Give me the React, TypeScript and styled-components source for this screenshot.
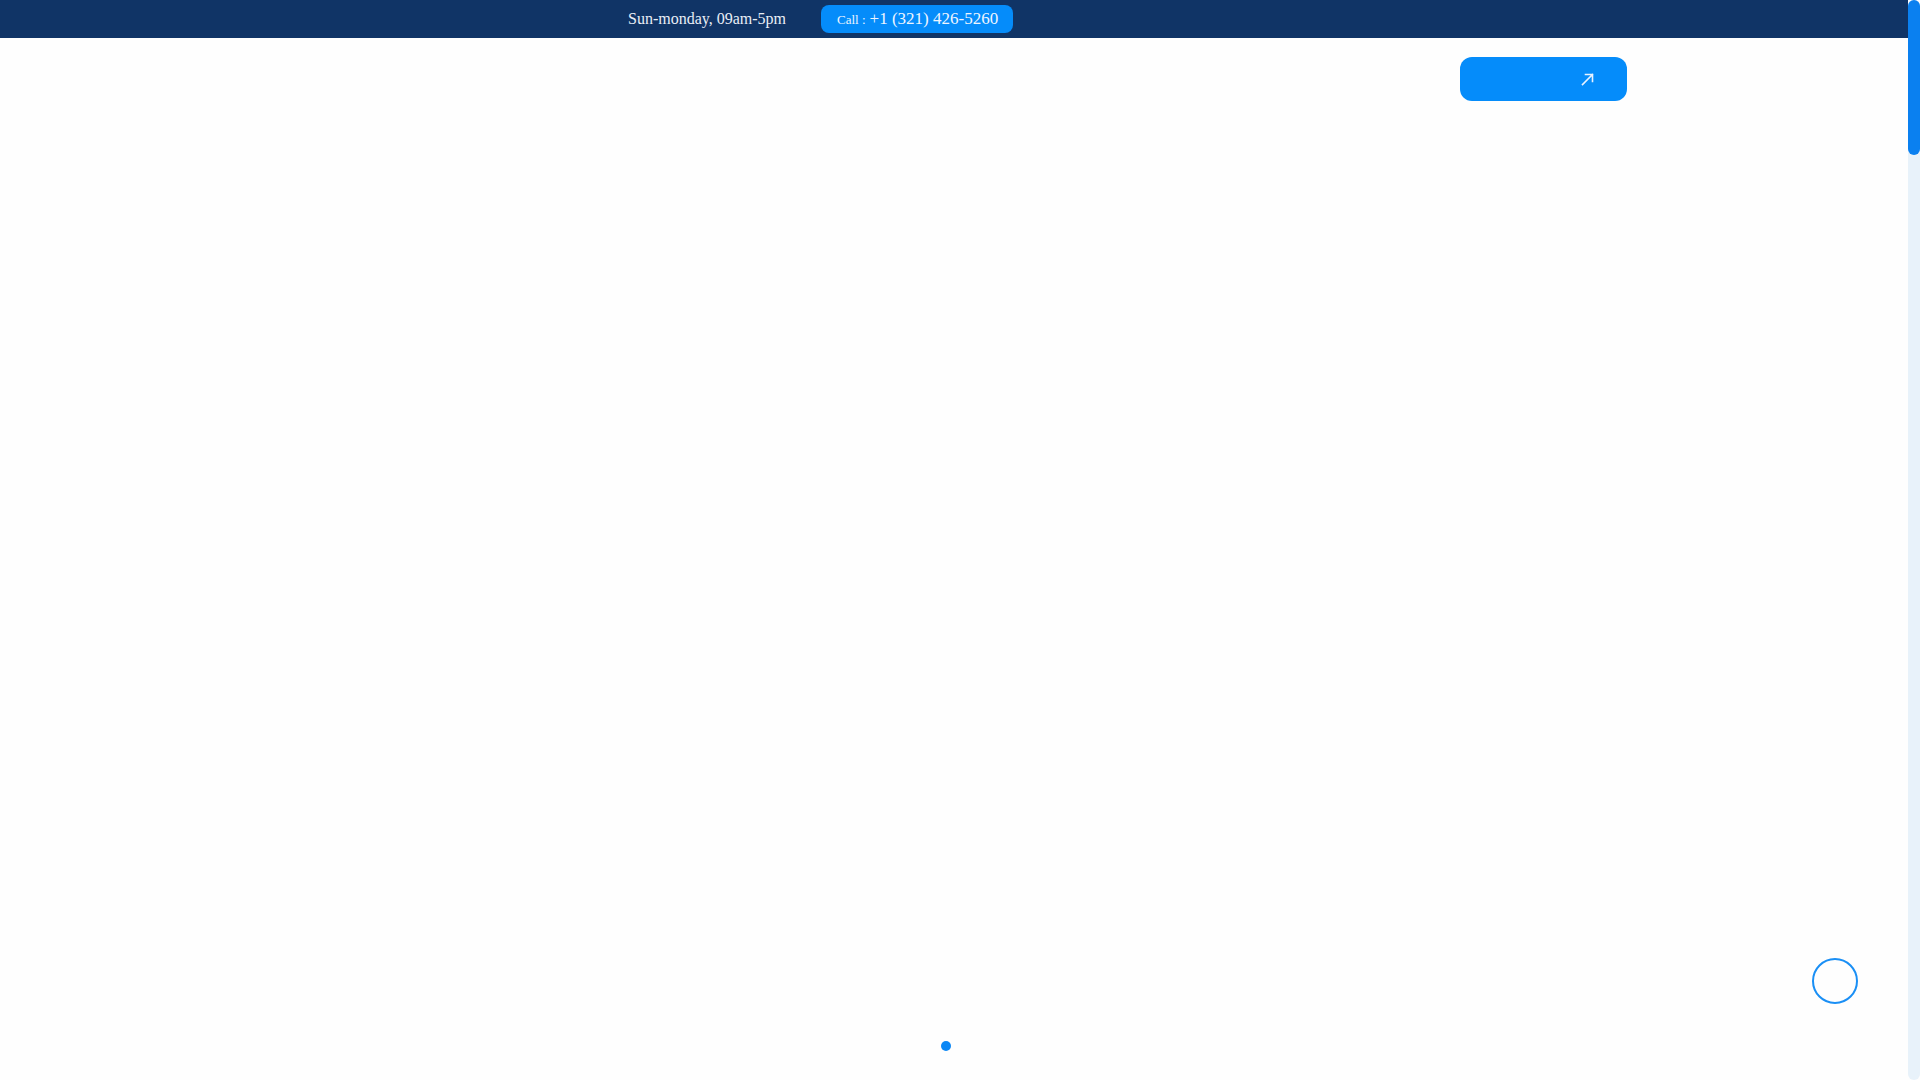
import React from "react";
import styled, { createGlobalStyle } from "styled-components";

const GlobalStyle = createGlobalStyle`
  html, body { margin: 0; padding: 0; }
  body {
    background: #fefefe;
    font-family: "Liberation Serif", "Times New Roman", serif;
    overflow: hidden;
  }
`;

const Shell = styled.div`
  display: flex;
  height: 100vh;
  overflow: hidden;
`;

const Page = styled.main`
  flex: 1;
  min-width: 0;
  display: flex;
  flex-direction: column;
`;

const ScrollRail = styled.div`
  width: 12px;
  flex: none;
  background: #e8f2fa;
  border-radius: 6px;
  display: flex;
  flex-direction: column;
`;

const ScrollThumb = styled.div`
  height: 155px;
  border-radius: 6px;
  background: #0a80f0;
`;

const TopBar = styled.div`
  background: #103466;
  height: 38px;
  flex: none;
`;

const Container = styled.div`
  max-width: 1346px;
  margin: 0 auto;
  height: 100%;
`;

const TopInner = styled(Container)`
  display: flex;
  align-items: center;
  padding-left: 347px;
  box-sizing: border-box;
  gap: 35px;
`;

const Hours = styled.span`
  color: #e9eef6;
  font-size: 16px;
  white-space: nowrap;
`;

const CallPill = styled.a`
  display: inline-flex;
  align-items: baseline;
  gap: 4px;
  height: 28px;
  width: 192px;
  box-sizing: border-box;
  padding-left: 16px;
  line-height: 28px;
  border-radius: 8px;
  background: #058cfa;
  color: #eef5ff;
  text-decoration: none;
  font-size: 17px;
  white-space: nowrap;
`;

const CallLabel = styled.span`
  font-size: 13px;
`;

const Header = styled.header`
  height: 82px;
  flex: none;
`;

const HeaderInner = styled(Container)`
  display: flex;
  justify-content: flex-end;
  align-items: flex-start;
  padding-top: 19px;
  box-sizing: border-box;
`;

const CtaButton = styled.a`
  display: flex;
  align-items: center;
  justify-content: flex-end;
  width: 167px;
  height: 44px;
  box-sizing: border-box;
  padding-right: 33px;
  border-radius: 12px;
  background: #058cfa;
  color: #ffffff;
`;

const Hero = styled.section`
  height: 960px;
  flex: none;
  display: flex;
  flex-direction: column;
  justify-content: flex-end;
  align-items: center;
  padding-bottom: 29px;
  box-sizing: border-box;
`;

const Pagination = styled.div`
  display: flex;
  gap: 6px;
`;

const Bullet = styled.span<{ $active?: boolean }>`
  width: 10px;
  height: 10px;
  border-radius: 50%;
  background: ${(p) => (p.$active ? "#0a87f5" : "transparent")};
`;

const ScrollTop = styled.button`
  position: fixed;
  right: 62px;
  bottom: 76px;
  width: 46px;
  height: 46px;
  border-radius: 50%;
  border: 2px solid #1a8ff5;
  background: transparent;
  padding: 0;
`;

const Arrow = () => (
  <svg width="13" height="13" viewBox="0 0 13 13" fill="none">
    <path
      d="M1.5 11.5L11.5 1.5M4.5 1.5H11.5V8.5"
      stroke="#e8f2ff"
      strokeWidth="1.6"
      strokeLinecap="square"
    />
  </svg>
);

export default function App() {
  return (
    <>
      <GlobalStyle />
      <Shell>
        <Page>
          <TopBar>
            <TopInner>
              <Hours>Sun-monday, 09am-5pm</Hours>
              <CallPill href="#">
                <CallLabel>Call :</CallLabel>
                <span>+1 (321) 426-5260</span>
              </CallPill>
            </TopInner>
          </TopBar>
          <Header>
            <HeaderInner>
              <CtaButton href="#">
                <Arrow />
              </CtaButton>
            </HeaderInner>
          </Header>
          <Hero>
            <Pagination>
              <Bullet $active />
              <Bullet />
            </Pagination>
          </Hero>
        </Page>
        <ScrollRail>
          <ScrollThumb />
        </ScrollRail>
      </Shell>
      <ScrollTop aria-label="Scroll to top" />
    </>
  );
}
